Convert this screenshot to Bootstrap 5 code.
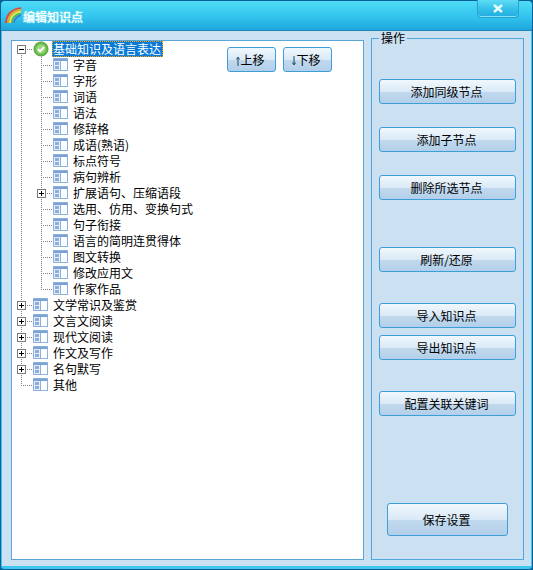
<!DOCTYPE html>
<html lang="zh"><head><meta charset="utf-8"><title>编辑知识点</title>
<link href="https://cdn.jsdelivr.net/npm/bootstrap@5.3.0/dist/css/bootstrap.min.css" rel="stylesheet">
<style>
html,body{margin:0;height:570px;overflow:hidden;background:#0b5f97}
body,.btn,legend{font-family:"Noto Sans CJK SC","Liberation Sans",sans-serif;font-size:12px;line-height:16px;color:#000}
.win{width:533px;height:570px;border:1px solid #0b5f97;border-radius:5px 5px 4px 4px;background:#3cc8f0}
.ttl{height:30px;background:linear-gradient(#4fdcf6,#32c4ee 55%,#1ea6dc);padding-left:4px;border-bottom:1px solid #1c86bd;flex:none;border-radius:4px 4px 0 0}
.ttl-txt{color:#fff;text-shadow:0 0 2px #bff,0 0 1px #fff;font-weight:400;padding-top:2px}
.xbtn{position:absolute;right:13px;top:-1px;width:42px;height:18px;background:linear-gradient(#5edcf5,#30bde8 60%,#22abe0);border:1px solid #2a9fd2;border-top:0;border-radius:0 0 4px 4px;box-shadow:inset 0 -1px 0 #7fe6fa}
.cli{background:#cbe1f1;margin:0 1px 3px 1px;flex:1;min-height:0;padding:8px 5px 5px 9px;gap:7px}
.tree{width:353px;height:520px;margin-top:1px;background:#fff;border:1px solid #5aa6d6;flex:none}
.tr{height:16px}
.cel{width:20px;height:16px;flex:none;position:relative}
.vl{position:absolute;left:9px;top:0;bottom:0;width:1px;background:repeating-linear-gradient(#808080 0 1px,transparent 1px 2px)}
.vh{bottom:8px}
.hl{position:absolute;left:9px;right:-1px;top:8px;height:1px;background:repeating-linear-gradient(90deg,#808080 0 1px,transparent 1px 2px)}
.bx{position:absolute;left:5px;top:4px;width:9px;height:9px;background:#fff;border:1px solid #7a7a7a}
.bx::before{content:"";position:absolute;left:1px;right:1px;top:3px;height:1px;background:#000}
.pl::after{content:"";position:absolute;top:1px;bottom:1px;left:3px;width:1px;background:#000}
.ico{width:16px;height:16px;margin-left:1px;flex:none;display:block}
.lb{margin-left:4px;white-space:nowrap}
.sel{margin-left:3px;padding:0 2px 0 1px;background:#0a7ad8;color:#fff;outline:1px dotted #ffa500;outline-offset:-1px}
.skb{--bs-btn-padding-x:0;--bs-btn-padding-y:0;display:block;width:137px;height:25px;padding:0 2px 0 0;border:1px solid #3e9fd8;border-radius:3px;background:linear-gradient(#f1f8fd,#d9e9f6 50%,#c1d9ee 52%,#b2cfe9);color:#000;font-size:12px;line-height:22px}
.mv{position:absolute;top:6px;width:49px;height:25px;left:215px}
.mv2{left:271px}
.arw{display:inline-block;vertical-align:-1px;margin-right:0}
.grp{width:153px;height:522px;margin:-1px 0 0;position:relative;border:0;padding:0}
.grp legend{float:none;width:auto;position:absolute;left:8px;top:-7px;padding:0 2px;margin:0;background:#cbe1f1;font-size:12px;line-height:14px;z-index:1}
.gbox{border:1px solid #4fa9dc;height:522px;padding:40px 7px 0 7px}
.m1{margin-bottom:23px}.m2{margin-bottom:47px}.m3{margin-bottom:31px}.m4{margin-bottom:7px}.m5{margin-bottom:87px}
.sv{width:121px;height:33px;margin-left:8px;line-height:30px}
</style></head><body>
<svg width="0" height="0" class="position-absolute"><defs>
<symbol id="tb" viewBox="0 0 16 16">
<rect x=".5" y="1.5" width="14" height="12" fill="#fbfdff" stroke="#8fb0dc"/>
<rect x="1" y="2" width="13" height="2" fill="#7a9fd4"/>
<rect x="1" y="4" width="6" height="9" fill="#e4edf8"/>
<rect x="7" y="4" width="1" height="9" fill="#8fb0dc"/>
<rect x="2" y="5" width="4" height="3" fill="#8aaee0"/><rect x="2" y="9" width="4" height="3" fill="#8aaee0"/>
</symbol></defs></svg>
<div class="win d-flex flex-column">
 <div class="ttl d-flex align-items-center position-relative">
  <svg width="18" height="17" viewBox="0 0 18 17" fill="none" stroke-width="1.7"><path d="M1 16C1 8 7 1.500 16 1" stroke="#e8402c"/><path d="M3 16C3 9 8 3.200 16 2.800" stroke="#f6a21c"/><path d="M5 16C5 10 10 5 16 4.600" stroke="#f4e43a"/><path d="M7 16C7 11.500 10.500 7 16 6.400" stroke="#4cc04a"/><path d="M9 16C9 13 12 9 16 8.200" stroke="#3c78dc"/></svg>
  <span class="ttl-txt">编辑知识点</span>
  <div class="xbtn d-flex align-items-center justify-content-center"><svg width="10" height="9" viewBox="0 0 10 9"><path d="M1 1l8 7M9 1L1 8" stroke="#eaffff" stroke-width="2.4"/></svg></div>
 </div>
 <div class="cli d-flex">
  <div class="tree position-relative" id="t"></div>
  <fieldset class="grp">
   <legend>操作</legend>
   <div class="gbox">
    <button class="btn skb m1">添加同级节点</button>
    <button class="btn skb m1">添加子节点</button>
    <button class="btn skb m2">删除所选节点</button>
    <button class="btn skb m3">刷新/还原</button>
    <button class="btn skb m4">导入知识点</button>
    <button class="btn skb m3">导出知识点</button>
    <button class="btn skb m5">配置关联关键词</button>
    <button class="btn skb sv">保存设置</button>
   </div>
  </fieldset>
 </div>
</div>
<script>
var ico='<svg class="ico"><use href="#tb"/></svg>';
var chk='<svg class="ico" viewBox="0 0 16 16"><circle cx="8" cy="8" r="7" fill="#6cbf4a" stroke="#4c9a3a"/><circle cx="8" cy="8" r="4.5" fill="#9ad67e"/><path d="M4.8 8l2.3 2.3 4-4.3" fill="none" stroke="#fff" stroke-width="2"/></svg>';
function cell(k){
 var s='<div class="cel">';
 if(k=='v')s+='<i class="vl"></i>';
 if(k=='t'||k=='p'||k=='root')s+=(k=='root'?'<i class="vl" style="top:8px"></i>':'<i class="vl"></i>')+'<i class="hl"></i>';
 if(k=='l')s+='<i class="vl vh"></i><i class="hl"></i>';
 if(k=='p')s+='<i class="bx pl"></i>';
 if(k=='root')s+='<i class="bx"></i>';
 return s+'</div>';
}
function row(cs,ic,tx,sel){return '<div class="tr d-flex align-items-center">'+cs.map(cell).join('')+ic+'<span class="lb'+(sel?' sel':'')+'">'+tx+'</span></div>';}
var h=row(['root'],chk,'基础知识及语言表达',1);
var k=['字音','字形','词语','语法','修辞格','成语(熟语)','标点符号','病句辨析','扩展语句、压缩语段','选用、仿用、变换句式','句子衔接','语言的简明连贯得体','图文转换','修改应用文','作家作品'];
k.forEach(function(x,i){h+=row(['v',i==8?'p':(i==14?'l':'t')],ico,x);});
['文学常识及鉴赏','文言文阅读','现代文阅读','作文及写作','名句默写'].forEach(function(x){h+=row(['p'],ico,x);});
h+=row(['l'],ico,'其他');
var up='<svg class="arw" width="4" height="10" viewBox="0 0 4 10"><path d="M2 10V2M0.500 3.500L2 1l1.500 2.500" fill="none" stroke="#1a4a6a"/></svg>';
var dn='<svg class="arw" width="4" height="10" viewBox="0 0 4 10"><path d="M2 0V8M0.500 6.500L2 9l1.500-2.500" fill="none" stroke="#1a4a6a"/></svg>';
h+='<button class="btn skb mv">'+up+'上移</button><button class="btn skb mv mv2">'+dn+'下移</button>';
document.getElementById('t').innerHTML=h;
</script>
<script src="https://cdn.jsdelivr.net/npm/bootstrap@5.3.0/dist/js/bootstrap.bundle.min.js"></script>
</body></html>
